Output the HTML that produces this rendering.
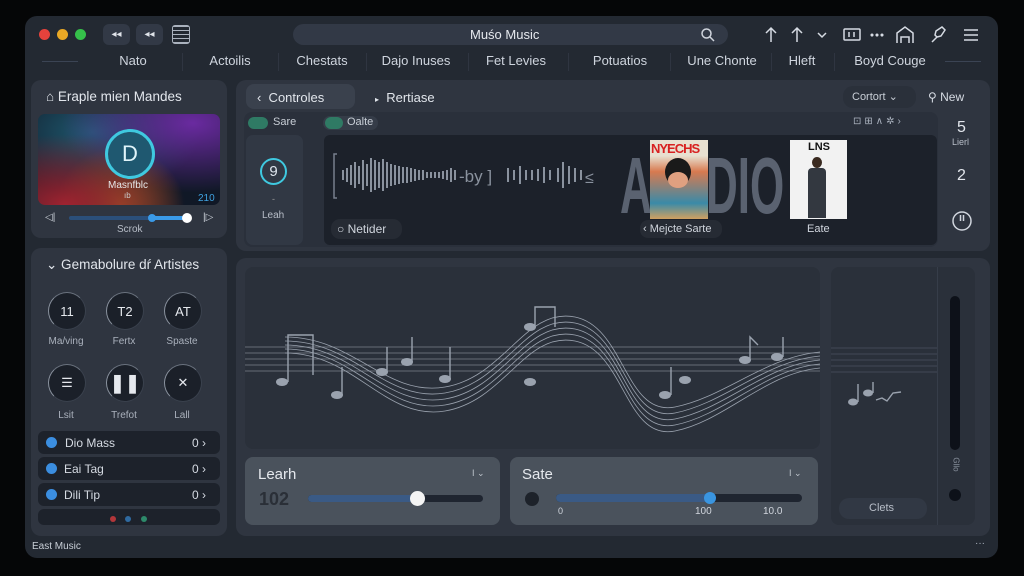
<!DOCTYPE html>
<html><head><meta charset="utf-8"><style>
*{box-sizing:border-box;margin:0;padding:0}
body{width:1024px;height:576px;background:#050607;font-family:"Liberation Sans",sans-serif;color:#d6dbe3;position:relative;overflow:hidden}
.a{position:absolute}
.win{left:25px;top:16px;width:973px;height:542px;background:#232932;border-radius:12px}
.panel{background:#2f3540;border-radius:10px}
.t{font-size:13px;white-space:nowrap}
.tab{position:absolute;top:53px;font-size:13px;color:#cfd5de;transform:translateX(-50%);white-space:nowrap}
.div{position:absolute;top:53px;width:1px;height:18px;background:#2f3541}
.circ{position:absolute;width:38px;height:38px;border-radius:50%;background:#1b2029;border:1px solid #3a414d;border-left-color:#8a929e;border-top-color:#6a727e;color:#e6e9ee;font-size:13px;display:flex;align-items:center;justify-content:center}
.lbl{position:absolute;font-size:10px;color:#aab1bc;transform:translateX(-50%)}
.row{position:absolute;left:38px;width:182px;height:23px;background:#1d222b;border-radius:6px;font-size:12px;color:#d6dbe3}
.ico{position:absolute;left:8px;top:6px;width:11px;height:11px;border-radius:50%;background:#3b8ee0}
.big{position:absolute;font-size:80px;color:#5a6270;font-weight:bold;line-height:80px;transform-origin:left top;white-space:nowrap}
</style></head><body>
<div class="a win"></div>
<!-- title bar -->
<div class="a" style="left:39px;top:29px;width:11px;height:11px;border-radius:50%;background:#e5423c"></div>
<div class="a" style="left:57px;top:29px;width:11px;height:11px;border-radius:50%;background:#e9a825"></div>
<div class="a" style="left:75px;top:29px;width:11px;height:11px;border-radius:50%;background:#35c04a"></div>
<div class="a" style="left:103px;top:24px;width:27px;height:21px;border-radius:6px;background:#323946;font-size:10px;text-align:center;line-height:21px;color:#e0e4ea">◂◂</div>
<div class="a" style="left:136px;top:24px;width:27px;height:21px;border-radius:6px;background:#323946;font-size:10px;text-align:center;line-height:21px;color:#e0e4ea">◂◂</div>
<div class="a" style="left:172px;top:25px;width:18px;height:19px;border:1.5px solid #aab2be;border-radius:3px;background:repeating-linear-gradient(0deg,#aab2be 0 1px,transparent 1px 4px)"></div>
<div class="a" style="left:293px;top:24px;width:435px;height:21px;border-radius:11px;background:#323946"></div>
<div class="a t" style="left:470px;top:27px;color:#e6e9ee">Muśo Music</div>
<svg class="a" style="left:700px;top:27px" width="16" height="16"><circle cx="6.5" cy="6.5" r="4.5" fill="none" stroke="#d0d5dd" stroke-width="1.5"/><path d="M10 10l4 4" stroke="#d0d5dd" stroke-width="1.5"/></svg>
<svg class="a" style="left:762px;top:25px" width="220" height="20" fill="none" stroke="#d6dbe3" stroke-width="1.5">
<path d="M9 3v14M4 8l5-5 5 5"/><path d="M35 3v14M30 8l5-5 5 5"/><path d="M56 8l4 4 4-4"/>
<rect x="82" y="4" width="16" height="11" rx="1"/><path d="M87 7v5M92 7v5"/>
<circle cx="110" cy="10" r=".8"/><circle cx="115" cy="10" r=".8"/><circle cx="120" cy="10" r=".8"/>
<path d="M135 18V8l8-6 8 6v10M139 18v-6h8v6"/>
<path d="M170 17l5-5M174 6l6-4 3 3-4 6-4 1-2-2z"/>
<path d="M202 5h14M202 10h14M202 15h14"/></svg>
<!-- tabs -->
<div class="a" style="left:42px;top:61px;width:36px;height:1px;background:#3b4454"></div>
<div class="a" style="left:945px;top:61px;width:36px;height:1px;background:#3b4454"></div>
<div class="tab" style="left:133px">Nato</div><div class="div" style="left:182px"></div>
<div class="tab" style="left:230px">Actoilis</div><div class="div" style="left:278px"></div>
<div class="tab" style="left:322px">Chestats</div><div class="div" style="left:366px"></div>
<div class="tab" style="left:416px">Dajo Inuses</div><div class="div" style="left:468px"></div>
<div class="tab" style="left:516px">Fet Levies</div><div class="div" style="left:568px"></div>
<div class="tab" style="left:620px">Potuatios</div><div class="div" style="left:670px"></div>
<div class="tab" style="left:722px">Une Chonte</div><div class="div" style="left:771px"></div>
<div class="tab" style="left:802px">Hleft</div><div class="div" style="left:834px"></div>
<div class="tab" style="left:890px">Boyd Couge</div>
<!-- left panel 1 -->
<div class="a panel" style="left:31px;top:80px;width:196px;height:158px"></div>
<div class="a t" style="left:46px;top:89px;font-size:13.5px;color:#e2e6ec">⌂ Eraple mien Mandes</div>
<div class="a" style="left:38px;top:114px;width:182px;height:91px;border-radius:7px;background:radial-gradient(ellipse at 15% 100%,#a02330 0%,transparent 55%),radial-gradient(ellipse at 45% 100%,#8a5a20 0%,transparent 45%),radial-gradient(ellipse at 85% 10%,#6a2aa0 0%,transparent 60%),radial-gradient(ellipse at 30% 20%,#1f5a70 0%,transparent 60%),#101826"></div>
<div class="a" style="left:105px;top:129px;width:50px;height:50px;border-radius:50%;border:3px solid #3fc9e0;background:#1f5870;color:#e0f4fa;font-size:22px;text-align:center;line-height:44px">D</div>
<div class="a" style="left:108px;top:180px;font-size:10px;color:#e6e8ea">Masnfblc</div>
<div class="a" style="left:124px;top:191px;font-size:8px;color:#ccc">ıb</div>
<div class="a" style="left:198px;top:193px;font-size:10px;color:#3fa2e0">210</div>
<div class="a" style="left:45px;top:212px;font-size:10px;color:#c8ced6">◁|</div>
<div class="a" style="left:203px;top:212px;font-size:10px;color:#c8ced6">|▷</div>
<div class="a" style="left:69px;top:216px;width:118px;height:4px;border-radius:2px;background:#2b4f7a"></div>
<div class="a" style="left:150px;top:216px;width:37px;height:4px;background:#3a9ae8"></div>
<div class="a" style="left:148px;top:214px;width:8px;height:8px;border-radius:50%;background:#3a9ae8"></div>
<div class="a" style="left:182px;top:213px;width:10px;height:10px;border-radius:50%;background:#fff"></div>
<div class="a" style="left:117px;top:224px;font-size:10px;color:#b8bec8">Scrok</div>
<!-- left panel 2 -->
<div class="a panel" style="left:31px;top:248px;width:196px;height:288px"></div>
<div class="a t" style="left:46px;top:257px;font-size:13.5px;color:#e2e6ec">⌄ Gemabolure dŕ Artistes</div>
<div class="circ" style="left:48px;top:292px">11</div><div class="circ" style="left:106px;top:292px">T2</div><div class="circ" style="left:164px;top:292px">AT</div>
<div class="lbl" style="left:66px;top:336px">Ma/ving</div><div class="lbl" style="left:124px;top:336px">Fertx</div><div class="lbl" style="left:182px;top:336px">Spaste</div>
<div class="circ" style="left:48px;top:364px">☰</div><div class="circ" style="left:106px;top:364px;font-size:18px;font-weight:bold">❚❚</div><div class="circ" style="left:164px;top:364px">✕</div>
<div class="lbl" style="left:66px;top:410px">Lsit</div><div class="lbl" style="left:124px;top:410px">Trefot</div><div class="lbl" style="left:182px;top:410px">Lall</div>
<div class="row" style="top:431px"><div class="ico"></div><span class="a" style="left:27px;top:5px">Dio Mass</span><span class="a" style="left:154px;top:5px">0 ›</span></div>
<div class="row" style="top:457px"><div class="ico"></div><span class="a" style="left:26px;top:5px">Eai Tag</span><span class="a" style="left:154px;top:5px">0 ›</span></div>
<div class="row" style="top:483px"><div class="ico"></div><span class="a" style="left:26px;top:5px">Dili Tip</span><span class="a" style="left:154px;top:5px">0 ›</span></div>
<div class="row" style="top:509px;height:16px"></div>
<div class="a" style="left:110px;top:516px;width:6px;height:6px;border-radius:50%;background:#b2363a"></div>
<div class="a" style="left:125px;top:516px;width:6px;height:6px;border-radius:50%;background:#2f6aa0"></div>
<div class="a" style="left:141px;top:516px;width:6px;height:6px;border-radius:50%;background:#2d8a6a"></div>
<!-- top right panel -->
<div class="a panel" style="left:236px;top:80px;width:754px;height:171px"></div>
<div class="a" style="left:246px;top:84px;width:109px;height:25px;border-radius:8px;background:#3a414d"></div>
<div class="a t" style="left:257px;top:90px;color:#e2e6ec">‹ &nbsp;Controles</div>
<div class="a t" style="left:375px;top:90px;color:#e2e6ec"><span style="font-size:8px">▸</span> &nbsp;Rertiase</div>
<div class="a" style="left:843px;top:86px;width:73px;height:22px;border-radius:10px;background:#2a303a"></div>
<div class="a" style="left:852px;top:90px;font-size:11px;color:#c8ced6">Cortort ⌄</div>
<div class="a t" style="left:928px;top:90px;font-size:12px;color:#d6dbe3">⚲ New</div>
<div class="a" style="left:244px;top:112px;width:694px;height:135px;border-radius:8px;background:#2a303b"></div>
<div class="a" style="left:248px;top:117px;width:20px;height:12px;border-radius:6px;background:#2f7a64"></div>
<div class="a" style="left:273px;top:116px;font-size:11px;color:#c8ced6">Sare</div>
<div class="a" style="left:323px;top:116px;width:55px;height:14px;border-radius:7px;background:#353c48"></div>
<div class="a" style="left:325px;top:117px;width:18px;height:12px;border-radius:6px;background:#2f7a64"></div>
<div class="a" style="left:347px;top:116px;font-size:11px;color:#c8ced6">Oalte</div>
<div class="a" style="left:853px;top:116px;font-size:10px;color:#aab2be;letter-spacing:3px">⊡⊞∧✲›</div>
<div class="a" style="left:246px;top:135px;width:57px;height:110px;border-radius:7px;background:#313844"></div>
<div class="a" style="left:260px;top:158px;width:27px;height:27px;border-radius:50%;border:2px solid #3fc9e0;text-align:center;line-height:23px;font-size:15px;color:#e0e6ee">9</div>
<div class="a" style="left:272px;top:194px;font-size:9px;color:#999">-</div>
<div class="a" style="left:262px;top:210px;font-size:10px;color:#b8bec8">Leah</div>
<div class="a" style="left:324px;top:135px;width:613px;height:110px;border-radius:6px;background:#1c212a"></div>
<svg class="a" style="left:333px;top:150px" width="290" height="50"><path d="M4 4H1v44h3" stroke="#777f8c" fill="none" stroke-width="1.5"/>
<g stroke="#8a929e" stroke-width="2">
<path d="M10 20v10M14 18v14M18 15v20M22 12v26M26 16v18M30 10v30M34 14v22M38 8v34M42 10v30M46 12v26M50 9v32M54 12v26M58 14v22M62 15v20M66 16v18M70 17v16M74 17v16M78 18v14M82 19v12M86 20v10M90 20v10M94 22v6M98 22v6M102 22v6M106 22v6M110 21v8M114 20v10M118 18v14M122 20v10"/></g>
<text x="126" y="32" fill="#8a929e" font-size="17">-by ]</text>
<g stroke="#8a929e" stroke-width="2"><path d="M175 18v14M181 20v10M187 16v18M193 20v10M199 20v10M205 19v12M211 17v16M217 20v10M225 18v14M230 12v26M236 16v18M242 18v14M248 20v10"/></g>
<text x="252" y="33" fill="#8a929e" font-size="16">≤</text></svg>
<div class="big" style="left:620px;top:146px;transform:scaleX(0.55)">A</div>
<div class="big" style="left:706px;top:146px;transform:scaleX(0.55)">DIO</div>
<div class="a" style="left:650px;top:140px;width:58px;height:79px;background:linear-gradient(180deg,#e8e0d0 0 20%,#d87a50 40%,#3a8aa8 80%,#d0a060)"></div>
<div class="a" style="left:651px;top:141px;font-size:13px;font-weight:bold;color:#d82020;letter-spacing:-1px">NYECHS</div>
<div class="a" style="left:665px;top:158px;width:26px;height:28px;border-radius:50%;background:#1a1a1a"></div>
<div class="a" style="left:668px;top:172px;width:20px;height:16px;border-radius:50%;background:#e0a080"></div>
<div class="a" style="left:790px;top:140px;width:57px;height:79px;background:#f2f2f2"></div>
<div class="a" style="left:808px;top:141px;font-size:11px;font-weight:bold;color:#111">LNS</div>
<div class="a" style="left:812px;top:157px;width:10px;height:11px;border-radius:50%;background:#3a2a20"></div>
<div class="a" style="left:808px;top:168px;width:18px;height:50px;background:#333840;border-radius:4px 4px 0 0"></div>
<div class="a" style="left:640px;top:220px;width:82px;height:18px;border-radius:8px;background:#262b34"></div>
<div class="a" style="left:643px;top:223px;font-size:11px;color:#d0d5dd">‹ Mejcte Sarte</div>
<div class="a" style="left:807px;top:223px;font-size:11px;color:#d0d5dd">Eate</div>
<div class="a" style="left:331px;top:219px;width:71px;height:20px;border-radius:9px;background:#262b34"></div>
<div class="a" style="left:337px;top:222px;font-size:12px;color:#d0d5dd">○ Netider</div>
<div class="a" style="left:957px;top:119px;font-size:16px;color:#e2e6ec">5</div>
<div class="a" style="left:952px;top:137px;font-size:9px;color:#b8bec8">Lierl</div>
<div class="a" style="left:957px;top:167px;font-size:16px;color:#e2e6ec">2</div>
<svg class="a" style="left:951px;top:210px" width="22" height="22" fill="none" stroke="#d0d5dd" stroke-width="1.5"><circle cx="11" cy="11" r="9"/><path d="M9.5 5v6M12.5 5v6"/></svg>
<!-- bottom right panel -->
<div class="a panel" style="left:236px;top:258px;width:754px;height:278px"></div>
<div class="a" style="left:245px;top:267px;width:575px;height:182px;border-radius:8px;background:#2a303a"></div>
<svg class="a" style="left:245px;top:267px" width="575" height="182" fill="none" stroke="#9aa2ae" stroke-width="0.8">
<g opacity=".7"><path d="M0 80H575M0 86H575M0 92H575M0 98H575M0 104H575"/></g>
<g><path d="M40 70C110 70 140 130 200 120S280 40 330 50 380 150 430 140 520 90 575 85"/>
<path d="M40 74C110 74 140 136 200 126S280 46 330 56 380 156 430 146 520 94 575 89"/>
<path d="M40 78C110 78 140 142 200 132S280 52 330 62 380 162 430 152 520 98 575 93"/>
<path d="M40 82C110 82 140 148 200 138S280 58 330 68 380 168 430 158 520 102 575 97"/>
<path d="M40 86C110 86 140 154 200 144S280 64 330 74 380 174 430 164 520 106 575 101"/></g>
<g fill="#9aa2ae" stroke="none"><ellipse cx="37" cy="115" rx="6" ry="4"/><ellipse cx="92" cy="128" rx="6" ry="4"/><ellipse cx="162" cy="95" rx="6" ry="4"/><ellipse cx="137" cy="105" rx="6" ry="4"/><ellipse cx="200" cy="112" rx="6" ry="4"/><ellipse cx="285" cy="60" rx="6" ry="4"/><ellipse cx="285" cy="115" rx="6" ry="4"/><ellipse cx="420" cy="128" rx="6" ry="4"/><ellipse cx="440" cy="113" rx="6" ry="4"/><ellipse cx="500" cy="93" rx="6" ry="4"/><ellipse cx="532" cy="90" rx="6" ry="4"/></g>
<g stroke-width="1.4"><path d="M43 115V68h25v40M97 128V100M167 95V70M142 105V80M205 112V80M290 60V40h20v20M426 128V100M505 93V70l8 8M538 90V70"/></g></svg>
<div class="a" style="left:831px;top:267px;width:144px;height:258px;border-radius:8px;background:#2a303a"></div>
<div class="a" style="left:937px;top:267px;width:1px;height:258px;background:#363d49"></div>
<svg class="a" style="left:831px;top:340px" width="106" height="70" fill="none" stroke="#5a6270" stroke-width=".6"><path d="M0 8h106M0 14h106M0 20h106M0 26h106M0 32h106"/>
<ellipse cx="22" cy="62" rx="5" ry="3.5" fill="#9aa2ae" stroke="none"/><ellipse cx="37" cy="53" rx="5" ry="3.5" fill="#9aa2ae" stroke="none"/><path d="M27 62V44M42 53V42M45 60l6-2 5 3 6-8 8-1" stroke="#9aa2ae" stroke-width="1.4"/></svg>
<div class="a" style="left:950px;top:296px;width:10px;height:154px;border-radius:5px;background:#0d1119"></div>
<div class="a" style="left:949px;top:460px;font-size:8px;color:#8a929e;transform:rotate(90deg)">Gllo</div>
<div class="a" style="left:949px;top:489px;width:12px;height:12px;border-radius:50%;background:#0d1119"></div>
<div class="a" style="left:839px;top:498px;width:88px;height:21px;border-radius:10px;background:#313844"></div>
<div class="a" style="left:869px;top:502px;font-size:11px;color:#b8bec8">Clets</div>
<!-- slider cards -->
<div class="a" style="left:245px;top:457px;width:255px;height:68px;border-radius:8px;background:#4a525c"></div>
<div class="a" style="left:258px;top:466px;font-size:15px;color:#e6e9ee">Learh</div>
<div class="a" style="left:472px;top:468px;font-size:9px;color:#c0c6ce">I ⌄</div>
<div class="a" style="left:259px;top:489px;font-size:18px;font-weight:bold;color:#2a2f37">102</div>
<div class="a" style="left:308px;top:495px;width:175px;height:7px;border-radius:4px;background:#1f2530"></div>
<div class="a" style="left:308px;top:495px;width:110px;height:7px;border-radius:4px;background:#3a5a85"></div>
<div class="a" style="left:410px;top:491px;width:15px;height:15px;border-radius:50%;background:#f4f4f4"></div>
<div class="a" style="left:510px;top:457px;width:308px;height:68px;border-radius:8px;background:#4a525c"></div>
<div class="a" style="left:522px;top:466px;font-size:15px;color:#e6e9ee">Sate</div>
<div class="a" style="left:789px;top:468px;font-size:9px;color:#c0c6ce">I ⌄</div>
<div class="a" style="left:525px;top:492px;width:14px;height:14px;border-radius:50%;background:#1d222a"></div>
<div class="a" style="left:556px;top:494px;width:246px;height:8px;border-radius:4px;background:#1f2530"></div>
<div class="a" style="left:556px;top:494px;width:154px;height:8px;border-radius:4px;background:#3a5a85"></div>
<div class="a" style="left:704px;top:492px;width:12px;height:12px;border-radius:50%;background:#3a95e0"></div>
<div class="a" style="left:558px;top:506px;font-size:9px;color:#d0d5dd">0</div>
<div class="a" style="left:695px;top:506px;font-size:10px;color:#d0d5dd">100</div>
<div class="a" style="left:763px;top:506px;font-size:10px;color:#d0d5dd">10.0</div>
<!-- status -->
<div class="a" style="left:32px;top:541px;font-size:10px;color:#c8ced6">East Music</div>
<div class="a" style="left:975px;top:538px;font-size:10px;color:#aab2be">···</div>
</body></html>
